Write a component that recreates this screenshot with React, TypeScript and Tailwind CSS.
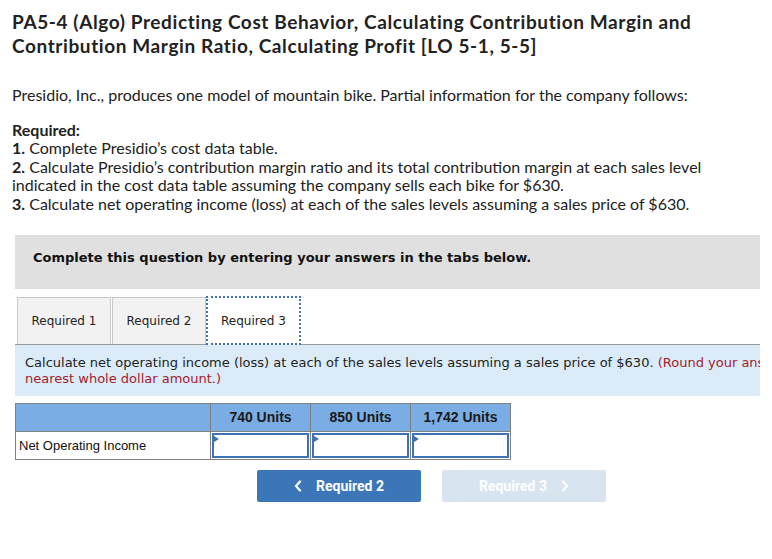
import React from "react";

const verdana = { fontFamily: '"DejaVu Sans", Verdana, sans-serif' };

function InputCell() {
  return (
    <td className="border border-[#808080] p-[1px] h-[28px] w-[100px]">
      <div className="relative h-full w-full border-2 border-[#3f72b4] bg-white">
        <span className="absolute left-0 top-[1px] h-0 w-0 border-y-[3px] border-l-[5px] border-y-transparent border-l-[#3f72b4]" />
      </div>
    </td>
  );
}

function Chevron({ dir }: { dir: "left" | "right" }) {
  return (
    <svg width="8" height="12" viewBox="0 0 8 12" fill="none">
      <path
        d={dir === "left" ? "M6 1.5 L2 6 L6 10.5" : "M2 1.5 L6 6 L2 10.5"}
        stroke="white"
        strokeWidth="2.2"
        strokeLinecap="round"
        strokeLinejoin="round"
      />
    </svg>
  );
}

export default function App() {
  return (
    <div className="w-[772px] h-[559px] bg-white overflow-hidden text-[#1a1a1a]">
      <div className="pl-[12px] pt-[10px] font-['Lato',sans-serif]">
        <h1 className="text-[19px] font-bold leading-[24px] tracking-[0.6px] text-[#222]">
          PA5-4 (Algo) Predicting Cost Behavior, Calculating Contribution Margin and
          <br />
          Contribution Margin Ratio, Calculating Profit [LO 5-1, 5-5]
        </h1>
        <p className="mt-[28px] text-[16px] leading-[18px] text-[#222]">
          Presidio, Inc., produces one model of mountain bike. Partial information for the company follows:
        </p>
        <div className="mt-[17px] text-[16px] leading-[18.4px] text-[#222]">
          <div className="font-bold">Required:</div>
          <div><b>1.</b> Complete Presidio’s cost data table.</div>
          <div><b>2.</b> Calculate Presidio’s contribution margin ratio and its total contribution margin at each sales level</div>
          <div>indicated in the cost data table assuming the company sells each bike for $630.</div>
          <div><b>3.</b> Calculate net operating income (loss) at each of the sales levels assuming a sales price of $630.</div>
        </div>
      </div>

      <div className="ml-[15px] w-[745px] mt-[22px]">
        <div className="h-[54px] bg-[#e0e0e0] flex items-center pl-[18px]" style={verdana}>
          <span className="text-[13px] font-bold text-[#111] -mt-[8px]">
            Complete this question by entering your answers in the tabs below.
          </span>
        </div>

        <div className="mt-[8px] flex items-end h-[48px] pl-[2px] border-b border-[#999]" style={verdana}>
          <div className="h-[47px] w-[94px] bg-[#f2f2f2] border border-b-0 border-[#c8c8c8] flex items-center justify-center text-[12px] text-[#222]">
            Required 1
          </div>
          <div className="ml-[1px] h-[47px] w-[94px] bg-[#f2f2f2] border border-b-0 border-[#c8c8c8] flex items-center justify-center text-[12px] text-[#222]">
            Required 2
          </div>
          <div className="-mb-[1px] h-[49px] w-[95px] bg-white border-2 border-dotted border-[#3f72b4] flex items-center justify-center text-[12px] text-[#222]">
            Required 3
          </div>
        </div>

        <div className="h-[51px] bg-[#dbecf8] pl-[10px] pt-[10px] text-[13px] leading-[16px] whitespace-nowrap overflow-hidden" style={verdana}>
          <div className="text-[#222]">
            Calculate net operating income (loss) at each of the sales levels assuming a sales price of $630.{" "}
            <span className="text-[#a3202d]">(Round your answers to the</span>
          </div>
          <div className="text-[#a3202d]">nearest whole dollar amount.)</div>
        </div>

        <table className="mt-[7px] border-collapse border border-[#808080] font-['Liberation_Sans',Arial,sans-serif]">
          <thead>
            <tr className="bg-[#7aade4] h-[28px]">
              <th className="border border-[#808080] w-[195px]" />
              <th className="border border-[#808080] w-[100px] text-[14px] font-bold text-[#1a1a1a]">740 Units</th>
              <th className="border border-[#808080] w-[100px] text-[14px] font-bold text-[#1a1a1a]">850 Units</th>
              <th className="border border-[#808080] w-[100px] text-[14px] font-bold text-[#1a1a1a]">1,742 Units</th>
            </tr>
          </thead>
          <tbody>
            <tr className="h-[28px]">
              <td className="border border-[#808080] pl-[3px] text-[13px] text-[#111] align-middle">Net Operating Income</td>
              <InputCell />
              <InputCell />
              <InputCell />
            </tr>
          </tbody>
        </table>

        <div className="mt-[10px] flex pl-[242px] gap-[21px] font-['Roboto',sans-serif]">
          <button className="w-[164px] h-[32px] rounded-[2px] bg-[#3a76b8] text-white text-[14px] font-bold flex items-center justify-center gap-[14px]">
            <Chevron dir="left" />
            <span>Required 2</span>
          </button>
          <button className="w-[164px] h-[32px] rounded-[2px] bg-[#d8e4f0] text-white text-[14px] font-bold flex items-center justify-center gap-[14px]">
            <span>Required 3</span>
            <Chevron dir="right" />
          </button>
        </div>
      </div>
    </div>
  );
}
